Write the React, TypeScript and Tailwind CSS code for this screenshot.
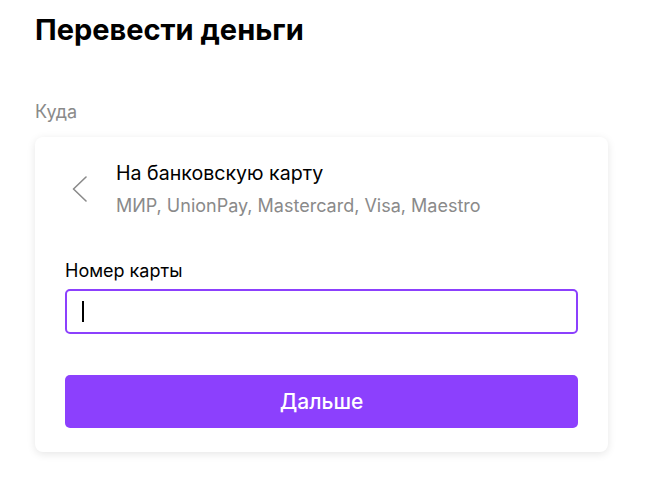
import React from "react";

export default function App() {
  return (
    <div className="min-h-[485px] w-[645px] bg-white font-['Inter','Noto_Sans',sans-serif] text-black">
      <div className="pl-[35px] pt-[12px]">
        <h1 className="text-[29px] leading-[36px] font-bold">Перевести деньги</h1>
        <div className="mt-[52px] text-[18px] leading-[24px] text-[#8a8a8a]">Куда</div>
        <div className="mt-[13px] w-[573px] rounded-[8px] bg-white shadow-[0_2px_8px_rgba(0,0,0,0.10)] px-[30px] pt-[24px] pb-[24px]">
          <div className="flex items-start">
            <div className="w-[51px] pt-[15px] pl-[7px]">
              <svg width="16" height="26" viewBox="0 0 16 26" fill="none">
                <path d="M14 1 L1.5 13 L14 25" stroke="#8a8a8a" strokeWidth="1.6" strokeLinecap="round" strokeLinejoin="round" />
              </svg>
            </div>
            <div>
              <div className="text-[19.6px] leading-[24px]">На банковскую карту</div>
              <div className="mt-[9px] text-[18px] leading-[24px] text-[#8a8a8a]">МИР, UnionPay, Mastercard, Visa, Maestro</div>
            </div>
          </div>
          <div className="mt-[41px] text-[18px] leading-[24px]">Номер карты</div>
          <div className="mt-[6px] h-[45px] w-[513px] rounded-[5px] border-2 border-[#8c40fd] flex items-center pl-[15px]">
            <div className="h-[21px] w-[1.5px] bg-black" />
          </div>
          <button className="mt-[41px] h-[53px] w-[513px] rounded-[5px] bg-[#8c40fd] text-white text-[21px] font-medium block">
            Дальше
          </button>
        </div>
      </div>
    </div>
  );
}
